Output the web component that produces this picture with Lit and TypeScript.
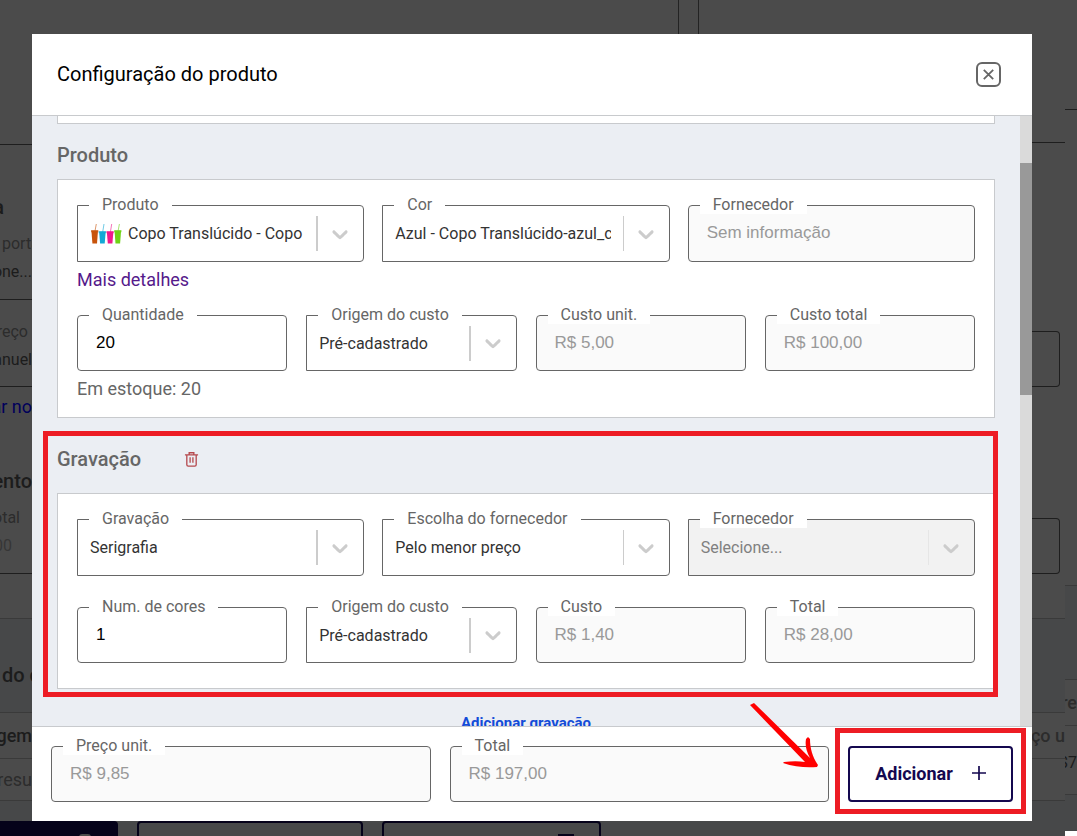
import { LitElement, html, css, svg, nothing } from "lit";
import { customElement } from "lit/decorators.js";
import { classMap } from "lit/directives/class-map.js";

interface FieldOptions {
  id: string;
  label: string;
  value: string;
  disabled?: boolean;
  thumb?: boolean;
  thin?: boolean;
}

const chevron = svg`<path d="M4.516 7.548c0.436-0.446 1.043-0.481 1.576 0l3.908 3.747 3.908-3.747c0.533-0.481 1.141-0.446 1.574 0 0.436 0.445 0.408 1.197 0 1.615-0.406 0.418-4.695 4.502-4.695 4.502-0.217 0.223-0.502 0.335-0.787 0.335s-0.57-0.112-0.789-0.335c0 0-4.287-4.084-4.695-4.502s-0.436-1.17 0-1.615z" />`;

const cupColors = ["#c8540c", "#13a9d6", "#f01a8c", "#6fd416"];

@customElement("app-root")
export class AppRoot extends LitElement {
  static styles = css`
    :host {
      display: block;
      position: relative;
      height: 100vh;
      min-height: 560px;
      overflow: hidden;
      background: #4b4b4b;
      font-family: Roboto, "Liberation Sans", sans-serif;
      font-size: 16px;
      color: #333;
    }
    * {
      box-sizing: border-box;
    }

    .dialog {
      position: absolute;
      inset: 34px 45px 15px 32px;
      display: flex;
      flex-direction: column;
      background: #fff;
    }
    .top {
      flex: none;
      display: flex;
      align-items: center;
      justify-content: space-between;
      height: 82px;
      padding: 0 31px 0 25px;
      border-bottom: 1px solid #c8cacd;
    }
    .title {
      margin: 0;
      padding-bottom: 2px;
      font-size: 20px;
      line-height: 24px;
      font-weight: 400;
      color: #000;
    }
    .close {
      display: grid;
      place-items: center;
      width: 25px;
      height: 25px;
      padding: 0;
      border: 2px solid #666;
      border-radius: 6px;
      background: none;
    }
    .body {
      flex: 1;
      min-height: 0;
      display: grid;
      grid-template-columns: 1fr 12px;
      overflow: hidden;
      background: #ebeef3;
    }
    .content {
      min-width: 0;
      padding: 0 25px;
    }
    .track {
      background: #dadada;
      padding-top: 47px;
    }
    .thumb {
      height: 232px;
      background: #999;
    }
    .card {
      padding: 25px 19px;
      border: 1px solid #c8cacd;
      background: #fff;
    }
    .card.previous {
      height: 8px;
      padding: 0;
      border-top: 0;
    }
    .card.stocked {
      padding-bottom: 10px;
    }
    .heading {
      display: flex;
      align-items: center;
      gap: 43px;
      padding: 19px 0 12px;
    }
    .heading.far {
      padding: 29px 0 22px;
    }
    .heading h2 {
      margin: 0;
      font-size: 20px;
      line-height: 24px;
      font-weight: 500;
      color: #666;
    }
    .trash {
      display: block;
      padding: 0;
      border: 0;
      background: none;
    }
    .trash svg {
      display: block;
    }
    .section {
      position: relative;
    }
    .grid3,
    .grid4 {
      display: grid;
    }
    .grid3 {
      --field-height: 57px;
      grid-template-columns: repeat(3, minmax(0, 1fr));
      gap: 18px;
    }
    .grid4 {
      grid-template-columns: repeat(4, minmax(0, 1fr));
      gap: 19px;
    }
    .details {
      display: block;
      width: max-content;
      margin-bottom: 17px;
      font-size: 18px;
      line-height: 36px;
      color: #551a8b;
      text-decoration: none;
    }
    .stock {
      margin: 0;
      font-size: 18px;
      line-height: 36px;
      color: #666;
    }
    .spaced {
      margin-top: 31px;
    }
    .add-print {
      display: block;
      width: max-content;
      margin: 22px auto 0;
      padding: 0;
      border: 0;
      background: none;
      font: 700 15px/24px Roboto, sans-serif;
      color: #134cd8;
    }

    /* fields */
    .field {
      position: relative;
      display: flex;
      height: var(--field-height, 56px);
      border: 1px solid #666;
      border-radius: 4px;
      background: #fff;
    }
    .field.select {
      border-radius: 0 4px 4px 0;
    }
    .field.off {
      background: #fafafa;
    }
    .field.select.off {
      background: #f2f2f2;
    }
    .field label {
      position: absolute;
      top: -11px;
      left: 11px;
      padding: 0 13px;
      line-height: 19px;
      color: #666;
      background: #fff;
      white-space: nowrap;
    }
    .field input {
      flex: 1;
      min-width: 0;
      padding: 0 18px 1px;
      border: 0;
      border-radius: 4px;
      background: none;
      font: 17px "Liberation Sans", Arial, sans-serif;
      color: #000;
    }
    .field input:disabled {
      color: #999;
    }
    .field select {
      appearance: none;
      flex: 1;
      min-width: 0;
      padding: 0;
      margin: 0 12px;
      border: 0;
      background: none;
      font: 16px Roboto, sans-serif;
      color: #333;
      opacity: 1;
    }
    .field select:disabled {
      color: #808080;
    }
    .bar {
      align-self: flex-start;
      flex: none;
      width: 2px;
      height: 35px;
      margin-top: 10px;
      background: #ccc;
    }
    .bar.thin {
      width: 1px;
    }
    .off .bar {
      background: #e6e6e6;
    }
    .arrow {
      flex: none;
      align-self: center;
      width: 26px;
      height: 26px;
      margin: 0 10px 0 9px;
      fill: #ccc;
    }
    .cups {
      flex: none;
      width: 32px;
      height: 24px;
      align-self: center;
      margin-left: 12px;
    }
    .cups + select {
      margin: 0 8px 0 6px;
    }

    /* footer */
    .footer {
      flex: none;
      position: relative;
      display: grid;
      grid-template-columns: 1fr 1fr 165px;
      gap: 19px;
      padding: 19px;
      border-top: 1px solid #c8cacd;
      background: #fff;
    }
    .confirm {
      position: relative;
    }
    .add {
      display: flex;
      align-items: center;
      justify-content: center;
      gap: 19px;
      width: 100%;
      height: 56px;
      padding: 0 0 2px;
      border: 2px solid #14084f;
      border-radius: 4px;
      background: #fff;
      font: 700 18px Roboto, sans-serif;
      color: #14084f;
    }

    /* highlights */
    .mark {
      position: absolute;
      border: 5px solid #ed1c24;
      pointer-events: none;
    }
    .mark.around-section {
      inset: 13px -3px -8px -14px;
    }
    .mark.around-button {
      inset: -18px -13px -12px;
    }
    .pointer {
      position: absolute;
      right: 212px;
      bottom: 48px;
      width: 72px;
      height: 72px;
      pointer-events: none;
    }
  `;

  private input({ id, label, value, disabled = false }: FieldOptions) {
    return html`<div class=${classMap({ field: true, off: disabled })}>
      <input id=${id} type="text" .value=${value} ?disabled=${disabled} />
      <label for=${id}>${label}</label>
    </div>`;
  }

  private select({ id, label, value, disabled = false, thumb = false, thin = false }: FieldOptions) {
    return html`<div class=${classMap({ field: true, select: true, off: disabled })}>
      ${thumb ? this.cups() : nothing}
      <select id=${id} ?disabled=${disabled}>
        <option>${value}</option>
      </select>
      <span class=${classMap({ bar: true, thin })}></span>
      <svg class="arrow" viewBox="0 0 20 20" aria-hidden="true">${chevron}</svg>
      <label for=${id}>${label}</label>
    </div>`;
  }

  private cups() {
    return html`<svg class="cups" viewBox="0 0 32 24" aria-hidden="true">
      ${cupColors.map((color, i) => {
        const x = 1 + i * 7.7;
        const y = i === 1 || i === 2 ? 10 : 9;
        return svg`<path d="M${x + 4} ${y}L${x + 5.3} 2" stroke=${color} stroke-width="1" opacity="0.6" />
          <path d="M${x + 0.4} ${y - 0.5}h6.6l-1 ${22 - y}h-4.6z" fill=${color} />
          <path d="M${x} ${y - 0.8}h7.4v2h-7.4z" fill=${color} opacity="0.7" />`;
      })}
    </svg>`;
  }

  render() {
    return html`
      <behind-page aria-hidden="true"></behind-page>
      <div class="dialog" role="dialog" aria-labelledby="title">
        <header class="top">
          <h1 class="title" id="title">Configuração do produto</h1>
          <button class="close" aria-label="Fechar">
            <svg width="11" height="11" viewBox="0 0 11 11" fill="none" stroke="#666" stroke-width="1.8">
              <path d="M0.8 0.8l9.4 9.4M10.2 0.8L0.8 10.2" />
            </svg>
          </button>
        </header>
        <div class="body">
          <main class="content">
            <div class="card previous"></div>
            <section>
              <div class="heading"><h2>Produto</h2></div>
              <div class="card stocked">
                <div class="grid3">
                  ${this.select({ id: "produto", label: "Produto", value: "Copo Translúcido - Copo", thumb: true })}
                  ${this.select({ id: "cor", label: "Cor", value: "Azul - Copo Translúcido-azul_claro", thin: true })}
                  ${this.input({ id: "fornecedor", label: "Fornecedor", value: "Sem informação", disabled: true })}
                </div>
                <a class="details" href="#">Mais detalhes</a>
                <div class="grid4">
                  ${this.input({ id: "quantidade", label: "Quantidade", value: "20" })}
                  ${this.select({ id: "origem", label: "Origem do custo", value: "Pré-cadastrado" })}
                  ${this.input({ id: "unitario", label: "Custo unit.", value: "R$ 5,00", disabled: true })}
                  ${this.input({ id: "custo-total", label: "Custo total", value: "R$ 100,00", disabled: true })}
                </div>
                <p class="stock">Em estoque: 20</p>
              </div>
            </section>
            <section class="section">
              <div class="heading far">
                <h2>Gravação</h2>
                <button class="trash" aria-label="Remover gravação">
                  <svg width="15" height="17" viewBox="0 0 16 18" fill="none" stroke="#b5494e" stroke-width="1.4">
                    <path d="M1 4h14M5.5 4V1.8h5V4M3 4v10.5a1.5 1.5 0 0 0 1.5 1.5h7a1.5 1.5 0 0 0 1.5-1.5V4M6.5 6.5v6M9.5 6.5v6" />
                  </svg>
                </button>
              </div>
              <div class="card">
                <div class="grid3">
                  ${this.select({ id: "gravacao", label: "Gravação", value: "Serigrafia" })}
                  ${this.select({ id: "escolha", label: "Escolha do fornecedor", value: "Pelo menor preço", thin: true })}
                  ${this.select({ id: "fornecedor-gravacao", label: "Fornecedor", value: "Selecione...", disabled: true, thin: true })}
                </div>
                <div class="grid4 spaced">
                  ${this.input({ id: "cores", label: "Num. de cores", value: "1" })}
                  ${this.select({ id: "origem-gravacao", label: "Origem do custo", value: "Pré-cadastrado" })}
                  ${this.input({ id: "custo", label: "Custo", value: "R$ 1,40", disabled: true })}
                  ${this.input({ id: "total-gravacao", label: "Total", value: "R$ 28,00", disabled: true })}
                </div>
              </div>
              <div class="mark around-section"></div>
            </section>
            <button class="add-print">Adicionar gravação</button>
          </main>
          <div class="track"><div class="thumb"></div></div>
        </div>
        <footer class="footer">
          ${this.input({ id: "preco", label: "Preço unit.", value: "R$ 9,85", disabled: true })}
          ${this.input({ id: "total", label: "Total", value: "R$ 197,00", disabled: true })}
          <div class="confirm">
            <button class="add">
              Adicionar
              <svg width="14" height="14" viewBox="0 0 14 14" stroke="#14084f" stroke-width="1.7" aria-hidden="true">
                <path d="M7 0v14M0 7h14" />
              </svg>
            </button>
            <div class="mark around-button"></div>
          </div>
          <svg class="pointer" viewBox="0 0 72 72" aria-hidden="true">
            <path d="M2 4L6 2L62 57C58 50 57 44 58 38L60 36L62 38C62 48 65 57 70 64L69 66C59 67 46 66 35 62L36 61C44 60 51 60 57 61Z" fill="#ff0000" />
          </svg>
        </footer>
      </div>
    `;
  }
}

interface Block {
  h: number;
  text?: string;
  kind?: string;
}

/* The dimmed page that shows round the dialog's edges. */
@customElement("behind-page")
export class BehindPage extends LitElement {
  static styles = css`
    :host {
      display: grid;
      grid-template-columns: 32px 1fr 33px 12px;
      height: 100%;
      overflow: hidden;
      background: #4b4b4b;
      color: #1c1c1c;
      white-space: nowrap;
    }
    * {
      box-sizing: border-box;
    }
    .strip {
      display: flex;
      flex-direction: column;
      overflow: hidden;
    }
    .block {
      flex: none;
      display: flex;
      align-items: center;
      overflow: hidden;
    }
    .dark { border-bottom: 1px solid #1e1e1e; }
    .line { border-bottom: 1px solid #3a3a3a; }
    .shade { background: #474849; }
    .muted { color: #2c2c2c; }
    .faint { color: #363636; }
    .end { justify-content: flex-end; }
    .start4 { padding-left: 2px; }
    .end4 { padding-right: 4px; }
    .end12 { padding-right: 12px; }
    .end20 { padding-right: 20px; }
    .end28 { padding-right: 28px; }
    .lower { padding-top: 18px; }
    .blue { color: #00005a; font-size: 18px; }
    .strong { font-size: 20px; font-weight: 500; }
    .medium { font-size: 18px; font-weight: 500; }
    .large { font-size: 18px; }
    .navy { background: #05021a; }
    .white { background: #fff; }
    .outline {
      margin-right: 5px;
      border: 1px solid #1e1e1e;
      border-left: 0;
      border-radius: 0 4px 4px 0;
    }
    .middle {
      display: flex;
      flex-direction: column;
      justify-content: space-between;
      overflow: hidden;
    }
    .panels {
      display: grid;
      grid-template-columns: 646fr 21px 333fr;
      height: 34px;
    }
    .gutter {
      border: solid #232323;
      border-width: 0 1px;
    }
    .actions {
      display: grid;
      grid-template-columns: 86px 226px 219px;
      gap: 19px;
      height: 15px;
      overflow: hidden;
      background: #474849;
    }
    .action {
      display: flex;
      justify-content: flex-end;
      height: 56px;
      padding: 11px 25px;
      border: 2px solid #05021a;
      border-radius: 4px;
    }
    .action.filled {
      background: #05021a;
      border-radius: 0 4px 4px 0;
    }
    .glyph {
      width: 16px;
      height: 16px;
      background: #05021a;
    }
    .filled .glyph {
      width: 12px;
      background: #4b4b4b;
      border-radius: 3px;
    }
  `;

  private strip(blocks: Block[]) {
    return html`<div class="strip">
      ${blocks.map(
        ({ h, text, kind }) => html`<div class="block ${kind ?? ""}" style="height:${h}px">${text ?? ""}</div>`
      )}
    </div>`;
  }

  render() {
    return html`
      ${this.strip([
        { h: 145, kind: "dark" },
        { h: 50 },
        { h: 24, text: "a", kind: "strong end end28" },
        { h: 12 },
        { h: 24, text: "porta", kind: "muted start4" },
        { h: 4 },
        { h: 24, text: "one...", kind: "end" },
        { h: 17, kind: "dark" },
        { h: 19 },
        { h: 24, text: "reço", kind: "muted end end4" },
        { h: 4 },
        { h: 24, text: "anuel", kind: "end" },
        { h: 16, kind: "dark" },
        { h: 7 },
        { h: 24, text: "ar no", kind: "blue end" },
        { h: 51 },
        { h: 24, text: "ento", kind: "strong end" },
        { h: 12 },
        { h: 24, text: "otal", kind: "muted end end12" },
        { h: 4 },
        { h: 24, text: "00", kind: "faint end end20" },
        { h: 17, kind: "dark" },
        { h: 45, kind: "line" },
        { h: 94, text: "do c", kind: "line shade strong start4 lower" },
        { h: 46, text: "agem", kind: "line medium end" },
        { h: 42, text: "resu", kind: "line large muted end" },
        { h: 20, kind: "shade" },
        { h: 16, kind: "navy" },
      ])}
      <div class="middle">
        <div class="panels"><span></span><span class="gutter"></span><span></span></div>
        <div class="actions">
          <span class="action filled"><span class="glyph"></span></span>
          <span class="action"></span>
          <span class="action"><span class="glyph"></span></span>
        </div>
      </div>
      ${this.strip([
        { h: 143, kind: "dark" },
        { h: 188 },
        { h: 56, kind: "outline" },
        { h: 131 },
        { h: 56, kind: "outline" },
        { h: 45, kind: "line" },
        { h: 94, kind: "line shade" },
        { h: 46, text: "ço u", kind: "line medium end muted" },
        { h: 42, kind: "line" },
        { h: 36, kind: "shade" },
      ])}
      ${this.strip([
        { h: 110, kind: "dark" },
        { h: 476, kind: "line" },
        { h: 94, kind: "line shade" },
        { h: 46, text: "re", kind: "line medium muted end" },
        { h: 24 },
        { h: 24, text: "$7", kind: "end" },
        { h: 21, kind: "line" },
        { h: 36, kind: "shade" },
        { h: 5, kind: "white" },
      ])}
    `;
  }
}
